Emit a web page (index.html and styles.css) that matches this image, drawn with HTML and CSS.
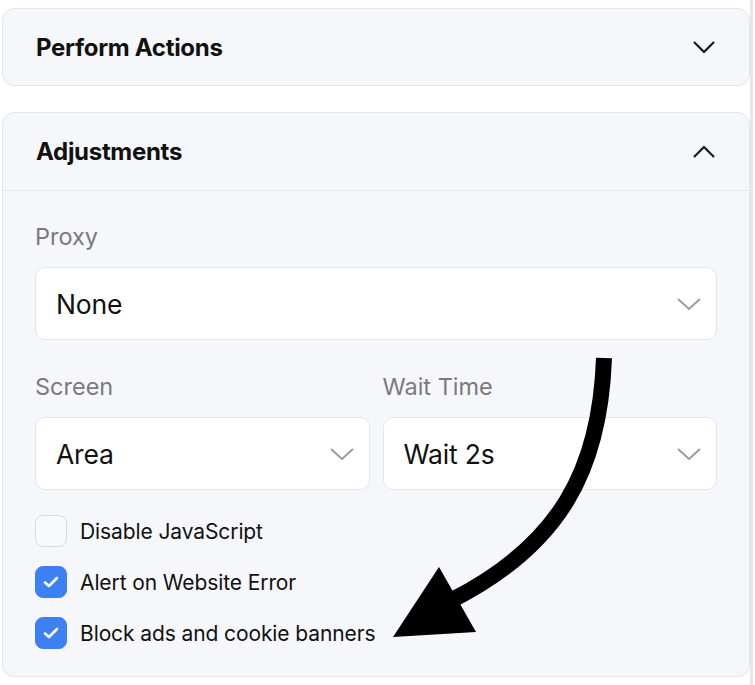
FILE: index.html
```html
<!DOCTYPE html>
<html lang="en">
<head>
	<meta charset="UTF-8">
	<title>Adjustments</title>
	<link rel="stylesheet" href="styles.css">
</head>
<body>
	<div class="page">
		<section class="panel">
			<div class="panel-head">
				<h2>Perform Actions</h2>
				<svg class="chev" width="24" height="14" viewBox="0 0 24 14"><path d="M2 2 L12 12 L22 2" fill="none" stroke="#111" stroke-width="2.2"/></svg>
			</div>
		</section>

		<section class="panel open">
			<div class="panel-head">
				<h2>Adjustments</h2>
				<svg class="chev" width="24" height="14" viewBox="0 0 24 14"><path d="M2 12 L12 2 L22 12" fill="none" stroke="#111" stroke-width="2.2"/></svg>
			</div>
			<div class="panel-body">
				<div class="field">
					<label>Proxy</label>
					<div class="select">
						<span>None</span>
						<svg width="26" height="14" viewBox="0 0 26 14"><path d="M2 2 L13 12 L24 2" fill="none" stroke="#9a9aa0" stroke-width="2"/></svg>
					</div>
				</div>
				<div class="row">
					<div class="field">
						<label>Screen</label>
						<div class="select">
							<span>Area</span>
							<svg width="26" height="14" viewBox="0 0 26 14"><path d="M2 2 L13 12 L24 2" fill="none" stroke="#9a9aa0" stroke-width="2"/></svg>
						</div>
					</div>
					<div class="field">
						<label>Wait Time</label>
						<div class="select">
							<span>Wait 2s</span>
							<svg width="26" height="14" viewBox="0 0 26 14"><path d="M2 2 L13 12 L24 2" fill="none" stroke="#9a9aa0" stroke-width="2"/></svg>
						</div>
					</div>
				</div>
				<ul class="checks">
					<li><span class="box"></span>Disable JavaScript</li>
					<li><span class="box on"><svg width="16" height="12" viewBox="0 0 16 12"><path d="M2 6.5 L6 10 L14 2" fill="none" stroke="#fff" stroke-width="2.6" stroke-linecap="round" stroke-linejoin="round"/></svg></span>Alert on Website Error</li>
					<li><span class="box on"><svg width="16" height="12" viewBox="0 0 16 12"><path d="M2 6.5 L6 10 L14 2" fill="none" stroke="#fff" stroke-width="2.6" stroke-linecap="round" stroke-linejoin="round"/></svg></span>Block ads and cookie banners</li>
				</ul>
			</div>
		</section>

		<!-- annotation arrow -->
		<svg class="arrow" width="755" height="685" viewBox="0 0 755 685">
			<path d="M604 358 C 600 470 560 545 452 600" fill="none" stroke="#000" stroke-width="16"/>
			<polygon points="439,567 476,632 393,637" fill="#000"/>
		</svg>
	</div>
</body>
</html>
```

FILE: styles.css
```css
body {
	margin: 0;
	font-family: Inter, "Noto Sans", sans-serif;
	color: #111;
	background: #fff;
}

.page {
	position: relative;
	width: 748px;
	height: 685px;
	padding: 8px 0 0 2px;
	border-right: 3px solid #e6e6e9;
	box-sizing: content-box;
}

.panel {
	background: #f6f7fb;
	border: 1px solid #e4e6ec;
	border-radius: 12px;
	margin-bottom: 26px;
}

.panel-head {
	height: 76px;
	display: flex;
	align-items: center;
	justify-content: space-between;
	padding: 0 33px 0 33px;
}

.panel-head h2 {
	margin: 0;
	font-size: 24px;
	font-weight: 700;
	letter-spacing: -0.3px;
}

.open .panel-head {
	height: 77px;
	border-bottom: 1px solid #e4e6ec;
}

.panel-body {
	padding: 31px 32px 27px 32px;
}

.field label {
	display: block;
	font-size: 23.5px;
	color: #7a7a7e;
	margin-bottom: 16px;
}

.select {
	height: 71px;
	background: #fff;
	border: 1px solid #e4e6ec;
	border-radius: 10px;
	display: flex;
	align-items: center;
	justify-content: space-between;
	padding: 0 14px 0 20px;
	font-size: 26.5px;
	letter-spacing: -0.2px;
}

.row {
	display: grid;
	grid-template-columns: 1fr 1fr;
	gap: 13px;
	margin-top: 32px;
}

.checks {
	list-style: none;
	margin: 25px 0 0 0;
	padding: 0;
}

.checks li {
	display: flex;
	align-items: center;
	height: 32px;
	margin-bottom: 19px;
	font-size: 21px;
	letter-spacing: -0.1px;
}

.checks li:last-child {
	margin-bottom: 0;
}

.box {
	width: 30px;
	height: 30px;
	border: 1px solid #d8d9de;
	border-radius: 8px;
	background: #f8f9fb;
	margin-right: 13px;
	display: flex;
	align-items: center;
	justify-content: center;
}

.box.on {
	background: #3d80f4;
	border-color: #3d80f4;
}

.arrow {
	position: absolute;
	left: 0;
	top: 0;
	pointer-events: none;
}
```
